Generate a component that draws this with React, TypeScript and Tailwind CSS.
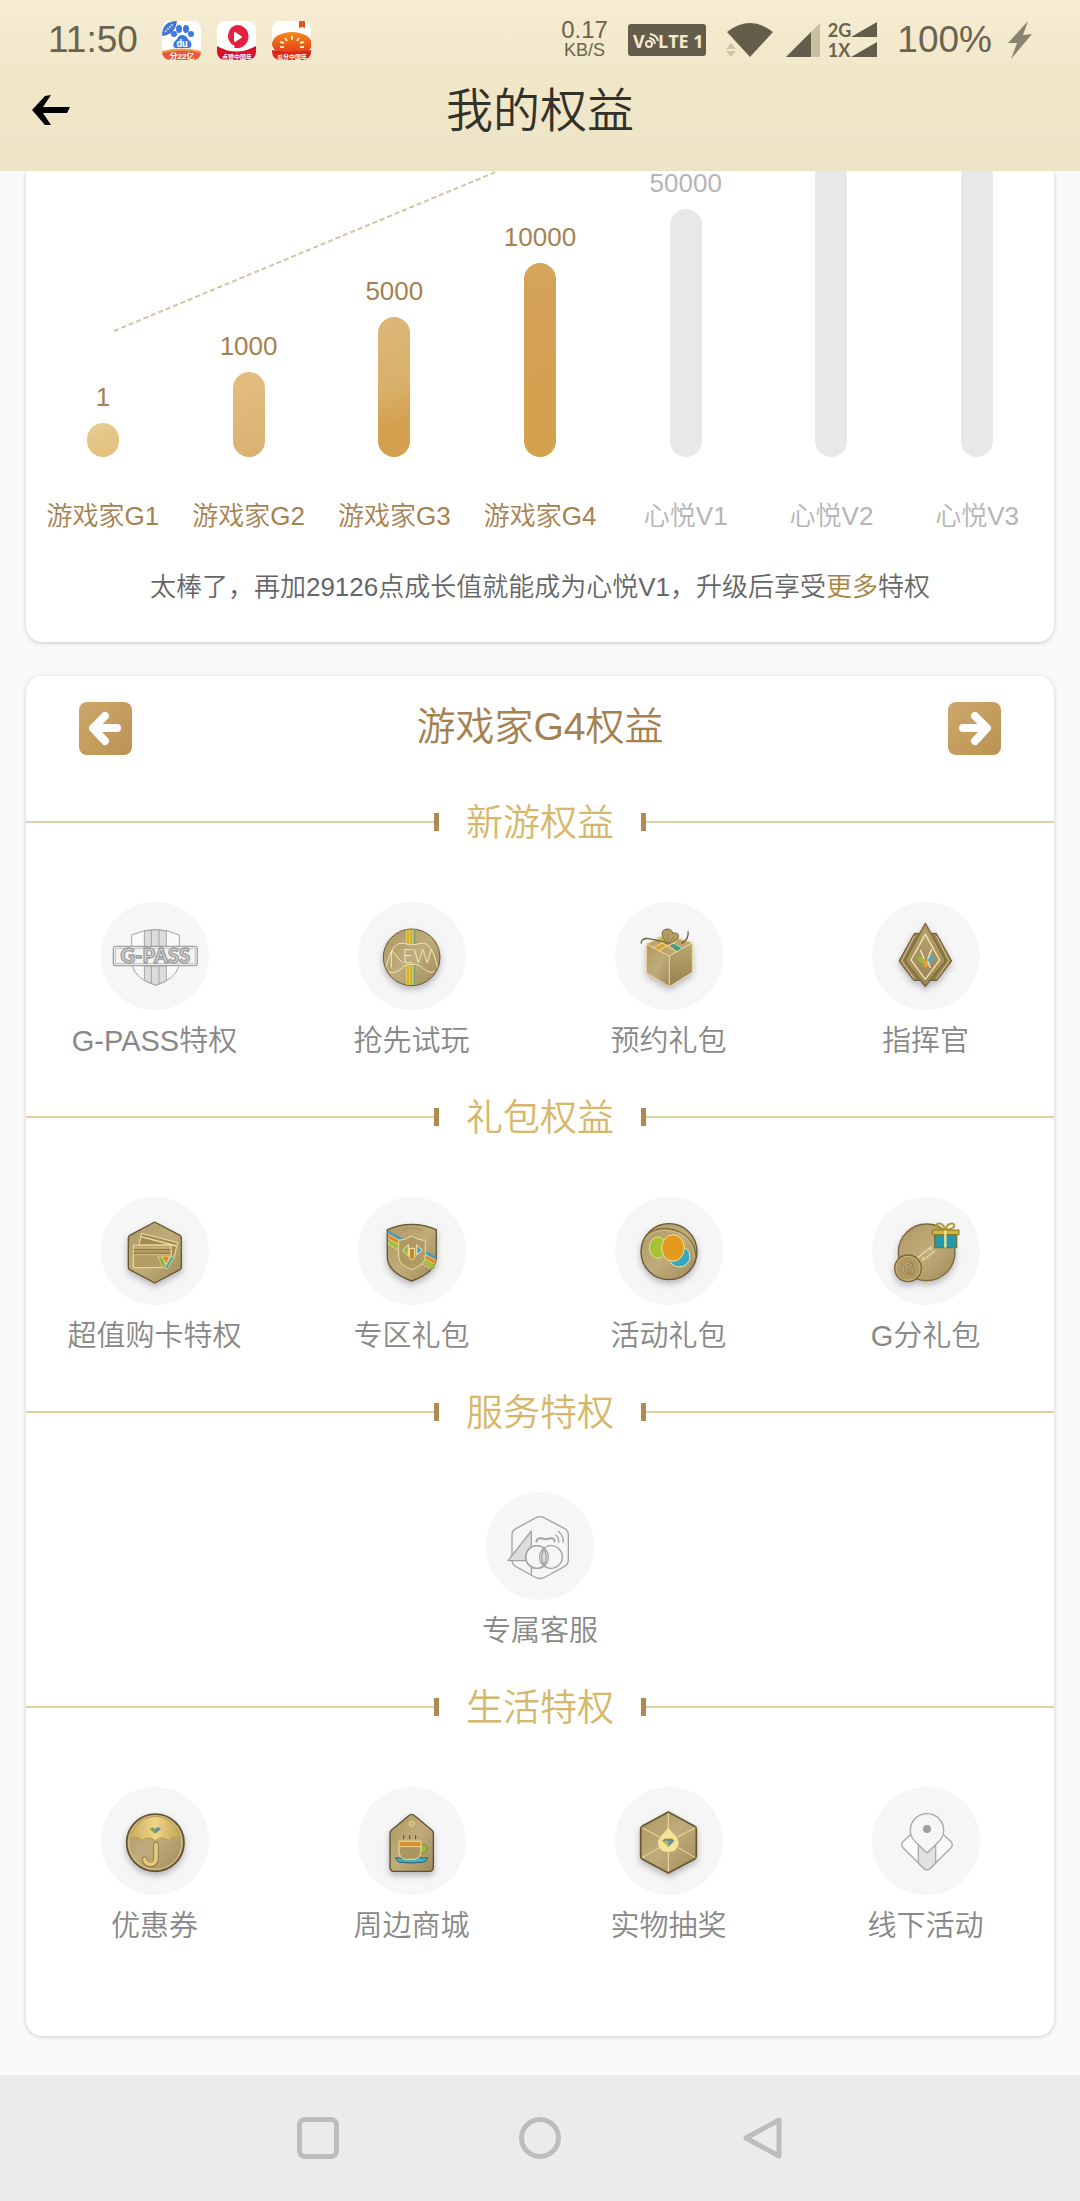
import type { ReactNode } from 'react';

const LEVELS = [
  { name: '游戏家G1', value: '1', height: 34, fill: 'bg-linear-170 from-[#e8cb8f] to-[#e2bf7e]' },
  { name: '游戏家G2', value: '1000', height: 85, fill: 'bg-linear-170 from-[#e3be80] to-[#d9b273]' },
  { name: '游戏家G3', value: '5000', height: 140, fill: 'bg-linear-160 from-[#ddb676] from-10% via-[#d9b06a] via-50% to-[#d4a04f] to-75%' },
  { name: '游戏家G4', value: '10000', height: 194, fill: 'bg-linear-170 from-[#d6a45a] to-[#d3a04d]' },
  { name: '心悦V1', value: '50000', height: 248, locked: true },
  // the last two run up under the header, so they have no value label
  { name: '心悦V2', height: 286, locked: true },
  { name: '心悦V3', height: 286, locked: true },
];

function Art({ x, y, children }: { x: number; y: number; children: ReactNode }) {
  return (
    <svg viewBox={`${x} ${y} 324 324`} className="w-full h-full" fill="none" strokeWidth="3" strokeLinejoin="round" aria-hidden="true">
      {children}
    </svg>
  );
}

const shadow = 'drop-shadow-[0_10px_9px_rgba(60,60,80,0.35)]';

const GPass = () => (
  <Art x={120} y={66}>
    <g stroke="#a3a3a3">
      <path d="M212 200V165Q284 132 355 165V200M214 258Q226 298 284 316Q342 298 354 258" fill="#fafafa" />
      <path d="M250 200V153Q284 145 316 153V200ZM250 258V301L284 316L316 303V258Z" fill="#dcdcdc" />
      <path d="M271 200V149M294 200V149M271 258V310M294 258V312" />
      <rect x="157" y="199" width="252" height="58" rx="9" fill="#f4f4f4" strokeWidth="4" />
      <rect x="163" y="205" width="240" height="46" rx="5" strokeWidth="2" />
    </g>
    <text x="283" y="249" textAnchor="middle" fontSize="60" fontWeight="900" fill="#d4d4d4" stroke="#9d9d9d" strokeWidth="4" fontFamily="Lato, sans-serif">
      G-PASS
    </text>
  </Art>
);

const NewGame = () => (
  <Art x={892} y={66}>
    <g className={shadow}>
      <circle cx="1053" cy="232" r="85" fill="url(#gold)" stroke="#6a5b35" />
    </g>
    <path d="M1037 149H1067V192H1037ZM1037 254H1067V315H1037Z" fill="#d2b330" />
    <path d="M1062 149V192M1062 254V315" stroke="#7aa6a0" strokeWidth="9" />
    <path d="M1037 149V192M1047 149V192M1057 149V192M1037 254V315M1047 254V315M1057 254V315" stroke="#e9dc86" strokeWidth="2" />
    <path d="M976 260C990 214 1000 190 1022 190C1040 190 1034 194 1053 194C1072 194 1070 190 1088 190C1110 190 1124 230 1130 262M984 275C1005 284 1018 268 1030 258Q1038 252 1053 252Q1070 252 1078 258C1092 268 1105 284 1122 273" stroke="#f2e7bd" />
    <path d="M992 262V214M992 210L1026 250" stroke="#f2e7bd" />
    <text x="1070" y="248" textAnchor="middle" fontSize="56" fontWeight="300" fill="#f2e7bd" fontFamily="Lato, sans-serif">
      EW
    </text>
  </Art>
);

const GiftBox = () => (
  <Art x={103} y={66}>
    <g className={shadow}>
      <path d="M197 192L266 228V320L202 283Q197 280 197 275Z" fill="url(#gold)" />
      <path d="M266 228L335 190V272Q335 277 330 280L266 320Z" fill="url(#goldDark)" />
      <path d="M197 192L258 164L335 188L266 228Z" fill="#bfa56c" />
    </g>
    <path d="M214 204L247 190L263 196L230 212Z" fill="#d9a436" />
    <path d="M269 196L284 190L306 204L290 214Z" fill="#3f9d88" />
    <path d="M228 173L246 168L250 184L240 182Z" fill="#a9b944" />
    <path d="M197 192L266 228L335 188L258 164ZM266 228V318M214 204L262 182M232 213L290 182M266 182L306 205M228 178L288 216M197 192V278L266 320L335 277V190" stroke="#eedda0" />
    <path d="M181 191Q183 173 203 176Q238 182 262 190M322 154Q326 178 302 190" stroke="#6b5d3c" strokeWidth="4" />
    <path d="M264 192C246 178 238 158 250 150C262 144 274 148 276 160C288 156 298 164 292 174C286 182 276 186 264 192Z" fill="#b59c64" stroke="#7a6839" />
    <path d="M264 190L262 160M266 190L280 168" stroke="#8c7846" strokeWidth="2" />
  </Art>
);

const Commander = () => (
  <Art x={873} y={66}>
    <g className={shadow}>
      <path d="M1000 160H1066L1112 243L1068 301H998L954 243Z" fill="#94804f" stroke="#65552f" />
      <path d="M1000 168L962 243L1000 296M1066 168L1104 243L1066 296" stroke="#d8c48a" />
      <path d="M1033 130L1092 236Q1094 242 1090 248L1033 320L976 248Q972 242 975 236Z" fill="url(#goldDark)" stroke="#7b683a" strokeWidth="4" />
    </g>
    <path d="M1033 140L1085 240L1033 310L981 240Z" stroke="#a89158" />
    <path d="M1033 163L1076 240L1033 298L990 240Z" stroke="#f0e4b5" strokeWidth="4" />
    <path d="M1008 232L1026 228V250L1014 246Z" fill="#9cb73b" />
    <path d="M1062 230L1042 226V252L1056 244Z" fill="#56a9bd" />
    <path d="M1026 230L1034 240L1042 230V256L1034 264L1026 256Z" fill="#dda03c" />
    <path d="M1018 210L1030 236M1052 208L1040 236M1048 264L1040 244" stroke="#f1ecd8" strokeWidth="4" />
  </Art>
);

const Cards = () => (
  <Art x={120} y={50}>
    <g className={shadow}>
      <path d="M281 125L357 165Q361 168 361 173V261Q361 266 357 268L281 308L206 268Q202 266 202 261V173Q202 168 206 165Z" fill="url(#gold)" stroke="#66582f" strokeWidth="4" />
    </g>
    <g stroke="#efdf9f">
      <path d="M242 159L350 187L338 235L330 228V194H234Z" fill="#a38c55" />
      <path d="M240 169L346 197" strokeWidth="4" />
      <path d="M217 195H330V228L305 262H217Z" fill="#b49c65" />
      <path d="M217 207H330M217 219H330" stroke="#8c733c" />
      <path d="M217 203H330M217 223H330" strokeWidth="2" />
    </g>
    <path d="M290 228L304 232L318 264L306 262Z" fill="#8fb03c" stroke="#eee0a5" strokeWidth="2" />
    <path d="M302 228H326L316 250Z" fill="#d98a2b" stroke="#eee0a5" strokeWidth="2" />
    <path d="M342 226L318 266L312 262L330 230Z" fill="#3ea79a" stroke="#eee0a5" strokeWidth="2" />
  </Art>
);

const ZoneShield = () => (
  <Art x={892} y={50}>
    <g className={shadow}>
      <path d="M980 148Q1053 116 1127 148V230C1127 270 1086 290 1053 302C1020 290 980 270 980 230Z" fill="url(#gold)" stroke="#66582f" strokeWidth="4" />
    </g>
    <path d="M982 155L1126 234" stroke="#4a9ac0" strokeWidth="9" />
    <path d="M982 167L1126 247" stroke="#e58a23" strokeWidth="11" />
    <path d="M982 183L1122 262" stroke="#a3c23c" strokeWidth="11" />
    <path d="M982 161L1126 240M982 175L1126 254M982 192L1116 269" stroke="#f4e9b2" strokeWidth="2" />
    <path d="M1053 166Q1070 180 1094 180V226C1094 250 1074 258 1053 268C1032 258 1014 250 1014 226V180Q1036 180 1053 166Z" fill="#af9964" stroke="#efe0a3" />
    <path d="M1043 193V226L1026 210Z" fill="#97b73f" stroke="#f4e9b2" />
    <path d="M1046 204H1062V232L1054 240L1046 232Z" fill="#c98725" stroke="#f4e9b2" />
    <path d="M1068 193V224L1085 210Z" fill="#4d9fca" stroke="#f4e9b2" />
    <path d="M1022 150Q1053 138 1085 150" stroke="#a48e59" />
  </Art>
);

const Balloons = () => (
  <Art x={103} y={50}>
    <g className={shadow}>
      <circle cx="265" cy="214" r="84" fill="url(#gold)" stroke="#66582f" strokeWidth="4" />
    </g>
    <path d="M192 172C214 140 262 138 300 156C330 172 344 198 346 230" stroke="#6d5d35" />
    <path d="M194 178C216 146 262 144 298 161C326 176 340 200 341 232" stroke="#d6c288" strokeWidth="2" />
    <ellipse cx="232" cy="202" rx="26" ry="32" fill="#a3c234" stroke="#eee08f" />
    <ellipse cx="296" cy="229" rx="32" ry="31" fill="#35a9c0" stroke="#f0e6b0" />
    <ellipse cx="277" cy="203" rx="34" ry="40" fill="#e39a1f" stroke="#f3e3a0" />
    <path d="M238 236L232 262M262 245L240 266" stroke="#c9b47a" />
  </Art>
);

const GPoints = () => (
  <Art x={873} y={50}>
    <g className={shadow}>
      <circle cx="1037" cy="216" r="85" fill="url(#gold)" stroke="#7a6838" strokeWidth="4" />
      <circle cx="981" cy="264" r="40" fill="#b09860" stroke="#7a6838" strokeWidth="4" />
    </g>
    <circle cx="981" cy="264" r="36" stroke="#d8c48d" strokeWidth="2" />
    <text x="981" y="283" textAnchor="middle" fontSize="50" fill="#e6d5a0" stroke="#7d6a3a" strokeWidth="2" fontFamily="Liberation Sans, sans-serif">
      G
    </text>
    <path d="M1010 232L1050 200V212M1062 212L1026 240V229" stroke="#ead99f" strokeWidth="4" />
    <path d="M1093 148C1070 148 1060 136 1070 130C1082 126 1090 138 1093 148C1096 138 1104 126 1116 130C1126 136 1116 148 1093 148Z" stroke="#b09734" strokeWidth="6" />
    <rect x="1061" y="162" width="66" height="40" fill="#2798a8" stroke="#7a7232" strokeWidth="4" />
    <rect x="1054" y="149" width="80" height="14" fill="#d0b73d" stroke="#857327" />
    <path d="M1093 150V202" stroke="#f0e08f" strokeWidth="7" />
  </Art>
);

const Service = () => (
  <Art x={136} y={66}>
    <g stroke="#a3a3a3" strokeWidth="4">
      <path d="M298 140Q306 140 314 145L372 176Q383 182 383 194V270Q383 282 372 289L314 321Q298 330 282 321L226 290Q214 283 214 270V194Q214 182 226 176L282 145Q290 140 298 140Z" />
      <path d="M272 183V272H202Z" fill="#dcdcdc" />
      <path d="M272 272V314" />
      <circle cx="289" cy="261" r="34" fill="#f6f6f6" />
      <circle cx="331" cy="261" r="34" fill="#f6f6f6" />
      <path d="M310 235Q324 261 310 287Q296 261 310 235Z" fill="#dcdcdc" />
      <circle cx="289" cy="261" r="34" />
      <path d="M287 217Q288 203 300 205L316 208L331 205Q342 204 342 217" strokeWidth="6" />
      <path d="M344 194Q355 202 354 218M352 183Q370 197 368 218" />
    </g>
  </Art>
);

const Umbrella = () => (
  <Art x={120} y={50}>
    <g className={shadow}>
      <circle cx="283" cy="217" r="86" fill="url(#gold)" stroke="#5f522e" strokeWidth="5" />
    </g>
    <circle cx="283" cy="217" r="80" stroke="#d9c68c" strokeWidth="3" />
    <path d="M207 205C215 164 245 140 283 138C321 140 350 164 359 205Q338 194 322 211Q302 194 283 211Q262 194 243 211Q228 194 207 205Z" fill="url(#goldBright)" stroke="#bc9c4e" />
    <path d="M285 222V266Q283 283 268 283Q253 283 251 266" stroke="#7f6b38" strokeWidth="15" strokeLinecap="round" />
    <path d="M285 222V266Q283 282 268 282Q253 282 251 266" stroke="#e9cb80" strokeWidth="11" strokeLinecap="round" />
    <path d="M266 176L274 170L282 176V190Z" fill="#8ba43c" />
    <path d="M282 176L292 170L300 176L282 190Z" fill="#5b8db0" />
  </Art>
);

const Mall = () => (
  <Art x={892} y={50}>
    <g className={shadow}>
      <path d="M1053 132Q1058 132 1062 136L1114 180Q1118 183 1118 188V290Q1118 303 1106 303H1000Q988 303 988 290V188Q988 183 992 180L1044 136Q1048 132 1053 132Z" fill="url(#gold)" stroke="#5f5230" strokeWidth="4" />
    </g>
    <circle cx="1053" cy="160" r="8" fill="#cbb173" stroke="#e3d29b" />
    <path d="M1028 206Q1032 200 1028 195M1046 206Q1050 200 1046 195M1064 206Q1068 200 1064 195" stroke="#4a4026" />
    <path d="M1080 223H1092Q1101 226 1100 236Q1098 247 1080 249" fill="#9fb638" stroke="#7b8c2b" />
    <path d="M1006 262Q1020 266 1030 261H1076Q1088 266 1100 262Q1102 272 1086 276Q1050 280 1018 276Q1004 272 1006 262Z" fill="#44afc1" stroke="#2e5d62" />
    <path d="M1015 213H1081V240Q1080 266 1060 267H1034Q1015 264 1015 240Z" fill="#ab9560" stroke="#f0e3ac" />
    <path d="M1015 213H1081V229H1015Z" fill="#d8902d" stroke="#e9d28b" />
  </Art>
);

const Lottery = () => (
  <Art x={103} y={50}>
    <g className={shadow}>
      <path d="M263 125L342 168Q347 171 347 177V257Q347 263 342 266L263 308L184 266Q180 263 180 257V177Q180 171 184 168Z" fill="url(#gold)" stroke="#66572f" strokeWidth="5" />
    </g>
    <path d="M263 128V170M263 240V304M184 172L236 200M344 172L290 200M184 262L236 232M344 262L292 232" stroke="#f0df9f" />
    <path d="M263 168C266 186 293 194 294 217Q292 244 263 245Q234 244 232 217C234 194 260 186 263 168Z" fill="#f3e496" />
    <path d="M244 212L252 205H274L281 212L263 230Z" fill="#c9b13a" />
    <path d="M263 206H274L281 212L263 230Z" fill="#5e97a7" />
    <path d="M244 212L252 205H274L281 212Z" fill="#7d8d86" />
  </Art>
);

const Offline = () => (
  <Art x={873} y={50}>
    <g stroke="#a9a9a9" strokeWidth="4">
      <path d="M988 193L966 214Q958 223 966 232L1028 294Q1038 303 1048 294L1110 232Q1118 223 1110 214L1088 193" fill="#fafafa" />
      <path d="M1012 226V278L1028 294Q1038 303 1048 294L1064 278V226Z" fill="#e2e2e2" />
      <path d="M1038 248L1006 217Q988 202 988 180A50 50 0 0 1 1088 180Q1088 202 1070 217Z" fill="#f6f6f6" />
    </g>
    <circle cx="1038" cy="176" r="12" fill="#a0a0a0" />
  </Art>
);

const SECTIONS = [
  {
    title: '新游权益',
    items: [
      { label: 'G-PASS特权', icon: <GPass /> },
      { label: '抢先试玩', icon: <NewGame /> },
      { label: '预约礼包', icon: <GiftBox /> },
      { label: '指挥官', icon: <Commander /> },
    ],
  },
  {
    title: '礼包权益',
    items: [
      { label: '超值购卡特权', icon: <Cards /> },
      { label: '专区礼包', icon: <ZoneShield /> },
      { label: '活动礼包', icon: <Balloons /> },
      { label: 'G分礼包', icon: <GPoints /> },
    ],
  },
  {
    title: '服务特权',
    items: [{ label: '专属客服', icon: <Service /> }],
  },
  {
    title: '生活特权',
    items: [
      { label: '优惠券', icon: <Umbrella /> },
      { label: '周边商城', icon: <Mall /> },
      { label: '实物抽奖', icon: <Lottery /> },
      { label: '线下活动', icon: <Offline /> },
    ],
  },
];

// Gradients shared by all the medal icons
function SharedDefs() {
  return (
    <svg className="absolute w-0 h-0" aria-hidden="true">
      <defs>
        <linearGradient id="gold" x1="0" y1="0" x2="1" y2="1">
          <stop offset="0" stopColor="#ad9863" />
          <stop offset="0.5" stopColor="#c0ac7b" />
          <stop offset="1" stopColor="#a08c5b" />
        </linearGradient>
        <linearGradient id="goldDark" x1="0" y1="0" x2="0" y2="1">
          <stop offset="0" stopColor="#bca671" />
          <stop offset="1" stopColor="#958050" />
        </linearGradient>
        <linearGradient id="goldBright" x1="0" y1="0" x2="1" y2="0">
          <stop offset="0" stopColor="#c9ac62" />
          <stop offset="0.5" stopColor="#f0d588" />
          <stop offset="1" stopColor="#c2a357" />
        </linearGradient>
        <linearGradient id="tangerine" x1="0" y1="0" x2="0" y2="1">
          <stop offset="0" stopColor="#f58a1c" />
          <stop offset="1" stopColor="#e2321a" />
        </linearGradient>
      </defs>
    </svg>
  );
}

function AppIcons() {
  return (
    <div className="flex gap-4 ml-6">
      <svg viewBox="0 0 39 39" className="w-[39px] h-[39px] rounded-lg bg-white" aria-hidden="true">
        <path d="M0 15C0 5 5 0 15 0C14 9 9 14 0 15Z" fill="#4577cf" />
        <path d="M3 11L11 3" stroke="#b9cdf2" strokeWidth="2" strokeDasharray="2 1" />
        <g fill="#3d78dc">
          <ellipse cx="12" cy="13" rx="3" ry="3" />
          <ellipse cx="17" cy="8" rx="3" ry="4" />
          <ellipse cx="24" cy="8" rx="3" ry="4" />
          <ellipse cx="29" cy="13" rx="3" ry="3" />
          <path d="M20 14C25 14 25 18 28 20C31 24 29 28 25 27H16C11 28 10 24 13 20C16 18 16 14 20 14Z" />
        </g>
        <text x="20" y="26" textAnchor="middle" fontSize="10" fontWeight="700" fill="#fff" fontFamily="Roboto, sans-serif">du</text>
        <path d="M0 31Q19 26 39 31V39H0Z" fill="#e8573a" />
        <path d="M0 31Q19 26 39 31" stroke="#f0a04a" strokeWidth="2" fill="none" />
        <text x="20" y="38" textAnchor="middle" fontSize="8" fontWeight="700" fill="#fff" fontFamily="Liberation Sans, Noto Sans CJK SC, sans-serif">分22亿</text>
      </svg>
      <svg viewBox="0 0 39 39" className="w-[39px] h-[39px] rounded-lg bg-white" aria-hidden="true">
        <path d="M20 4A11 11 0 0 1 20 27H17Q19 25 16 24A11 11 0 0 1 20 4Z" fill="#e5203f" />
        <path d="M18 12L24 16L18 20Z" fill="#fff" stroke="#fff" strokeWidth="2" strokeLinejoin="round" />
        <path d="M0 25Q19 36 39 25V39H0Z" fill="#d8112b" />
        <text x="20" y="38" textAnchor="middle" fontSize="6" fontWeight="700" fill="#fff" fontFamily="Noto Sans CJK SC, sans-serif">点赞中国年</text>
      </svg>
      <svg viewBox="0 0 39 39" className="w-[39px] h-[39px] rounded-lg bg-white" aria-hidden="true">
        <path d="M27 0H33V7L30 6L27 7Z" fill="#e2561c" />
        <ellipse cx="20" cy="23" rx="20" ry="12" fill="url(#tangerine)" />
        <path d="M20 15V19M13 17L15 20M27 17L25 20M8 21L12 22M32 21L28 22M8 26H12M28 26H32" stroke="#ffe9b8" strokeWidth="2" />
        <path d="M0 29Q19 33 39 29V39H0Z" fill="#d9261c" />
        <text x="20" y="38" textAnchor="middle" fontSize="6" fontWeight="700" fill="#fff" fontFamily="Noto Sans CJK SC, sans-serif">瓜分中国年</text>
      </svg>
    </div>
  );
}

function StatusBar() {
  return (
    <div className="flex items-center h-20 px-12 text-[#6b6350]">
      <span className="text-[37px] leading-10">11:50</span>
      <AppIcons />
      <div className="ml-auto flex flex-col items-center">
        <span className="text-[24px] leading-5">0.17</span>
        <span className="text-[18px] leading-5">KB/S</span>
      </div>
      <svg viewBox="0 0 78 32" className="w-[78px] h-8 ml-5" aria-label="VoLTE 1">
        <rect width="78" height="32" rx="3" fill="#645d4b" />
        <g fill="#f4ead0" fontSize="18" fontWeight="700" fontFamily="Open Sans, sans-serif">
          <text x="5" y="24">V</text>
          <text x="30" y="24">LTE 1</text>
        </g>
        <g fill="none" stroke="#f4ead0" strokeWidth="2">
          <circle cx="21" cy="20" r="3" />
          <path d="M21 14Q26 14 27 20M22 10Q29 11 30 17" />
        </g>
      </svg>
      <svg viewBox="0 0 48 36" className="w-12 h-9 ml-5" aria-hidden="true">
        <path d="M1 10Q24 -8 47 10L24 35Z" fill="#645d4b" />
        <path d="M0 27L5 21L10 27ZM0 29L5 35L10 29Z" fill="#cfc5a6" />
      </svg>
      <svg viewBox="0 0 34 36" className="w-[34px] h-9 ml-3" aria-hidden="true">
        <path d="M0 35L34 1V35Z" fill="#c9c0a4" />
        <path d="M0 35L25 10V35Z" fill="#645d4b" />
      </svg>
      <div className="flex flex-col ml-2 text-[18px] leading-5 font-bold font-[Lato,sans-serif]">
        <span>2G</span>
        <span>1X</span>
      </div>
      <svg viewBox="0 0 26 36" className="w-[26px] h-9" aria-hidden="true">
        <path d="M0 15L26 0V15ZM0 35L26 20V35Z" fill="#645d4b" />
      </svg>
      <span className="text-[37px] leading-10 ml-5">100%</span>
      <svg viewBox="0 0 24 38" className="w-6 h-[38px] ml-4" aria-hidden="true">
        <path d="M20 0L0 22L9 22L3 38L24 13L15 14Z" fill="#8b8370" />
      </svg>
    </div>
  );
}

function GrowthCard() {
  return (
    <section className="bg-white rounded-b-2xl shadow-[0_1px_4px_rgba(0,0,0,0.2)] pb-[38px]">
      <div className="relative">
        <svg viewBox="0 0 1028 286" preserveAspectRatio="none" className="absolute inset-0 w-full h-full" aria-hidden="true">
          <path d="M88 160L472 0" stroke="#d3c5a0" strokeWidth="2" strokeDasharray="5 3" />
        </svg>
        <div className="flex items-end px-1">
          {LEVELS.map(level => (
            <div key={level.name} className="flex-1 flex flex-col items-center">
              {level.value && (
                <span className={`text-[26px] leading-6 mb-[14px] ${level.locked ? 'text-[#b5b5b5]' : 'text-[#a68150]'}`}>
                  {level.value}
                </span>
              )}
              <div
                className={`w-8 rounded-b-full ${level.value ? 'rounded-t-full' : ''} ${level.locked ? 'bg-[#e8e8e8]' : level.fill}`}
                style={{ height: level.height }}
              />
            </div>
          ))}
        </div>
      </div>
      <div className="flex px-1 mt-[42px]">
        {LEVELS.map(level => (
          <span
            key={level.name}
            className={`flex-1 text-center text-[26px] leading-[34px] whitespace-nowrap ${level.locked ? 'text-[#b5b5b5]' : 'text-[#a68150]'}`}
          >
            {level.name}
          </span>
        ))}
      </div>
      <p className="mt-[37px] text-center text-[26px] leading-[34px] text-[#666]">
        太棒了，再加29126点成长值就能成为心悦V1，升级后享受
        <a href="#more" className="text-[#ab8345]">更多</a>特权
      </p>
    </section>
  );
}

function ArrowButton({ flip, label }: { flip?: boolean; label: string }) {
  return (
    <button
      type="button"
      aria-label={label}
      className="w-[53px] h-[53px] rounded-lg bg-linear-to-br from-[#cda76c] to-[#bb9352]"
    >
      <svg viewBox="0 0 53 53" className={flip ? 'w-full h-full -scale-x-100' : 'w-full h-full'} aria-hidden="true">
        <path d="M26 14L14 26L26 39M16 26H38" fill="none" stroke="#fff" strokeWidth="8" strokeLinecap="round" strokeLinejoin="round" />
      </svg>
    </button>
  );
}

export default function App() {
  return (
    <div className="min-h-screen flex flex-col bg-[#fafafa] font-['Liberation_Sans','Noto_Sans_CJK_SC',sans-serif] font-[350]">
      <SharedDefs />

      <header className="relative z-10 h-[171px] bg-linear-to-b from-[#f6ecd2] via-[#f0e7c9] via-50% to-[#ede3c6]">
        <StatusBar />
        <div className="grid grid-cols-[1fr_auto_1fr] items-center h-[62px] px-8">
          <button type="button" aria-label="返回" className="w-10 h-8">
            <svg viewBox="0 0 40 32" className="w-full h-full" aria-hidden="true">
              <path d="M0 15L13 1L19 0L11 12L38 12L35 18L11 18L19 30L13 30Z" fill="#000" />
            </svg>
          </button>
          <h1 className="text-[47px] leading-[58px] text-[#333129]">我的权益</h1>
        </div>
      </header>

      <main className="flex-1 px-[26px] pb-[39px]">
        <GrowthCard />

        <section className="mt-[34px] bg-white rounded-2xl shadow-[0_1px_4px_rgba(0,0,0,0.2)] pt-[26px] pb-[61px]">
          <div className="flex items-start justify-between px-[53px] mb-10">
            <ArrowButton label="上一等级" />
            <h2 className="text-[39px] leading-[50px] text-[#a68150]">游戏家G4权益</h2>
            <ArrowButton label="下一等级" flip />
          </div>

          {SECTIONS.map(section => (
            <div key={section.title} className="pb-[29px]">
              <div className="flex items-center h-[54px]">
                <div className="flex-1 h-[2px] bg-[#ddd0a2]" />
                <div className="w-[5px] h-[18px] bg-[#b08a50]" />
                <h3 className="mx-[27px] pt-1 text-[37px] leading-[50px] text-[#d6b86c]">{section.title}</h3>
                <div className="w-[5px] h-[18px] bg-[#b08a50]" />
                <div className="flex-1 h-[2px] bg-[#ddd0a2]" />
              </div>
              <div className="flex pt-[53px]">
                {section.items.map(item => (
                  <a key={item.label} href="#privilege" className="flex-1 flex flex-col items-center">
                    <span className="w-[108px] h-[108px] rounded-full bg-[#f6f6f6]">{item.icon}</span>
                    <span className="mt-[11px] text-[29px] leading-10 text-[#888]">{item.label}</span>
                  </a>
                ))}
              </div>
            </div>
          ))}
        </section>
      </main>

      <nav className="flex justify-center items-center gap-[180px] h-[126px] bg-[#ebebeb]">
        <button type="button" aria-label="最近任务" className="w-[42px] h-[42px] rounded-lg border-5 border-[#bdbdbd]" />
        <button type="button" aria-label="主屏幕" className="w-[42px] h-[42px] rounded-full border-5 border-[#bdbdbd]" />
        <button type="button" aria-label="返回上一页" className="w-[42px] h-[42px]">
          <svg viewBox="0 0 42 42" className="w-full h-full" aria-hidden="true">
            <path d="M38 3V39L5 21Z" fill="none" stroke="#bdbdbd" strokeWidth="5" strokeLinejoin="round" />
          </svg>
        </button>
      </nav>
    </div>
  );
}
